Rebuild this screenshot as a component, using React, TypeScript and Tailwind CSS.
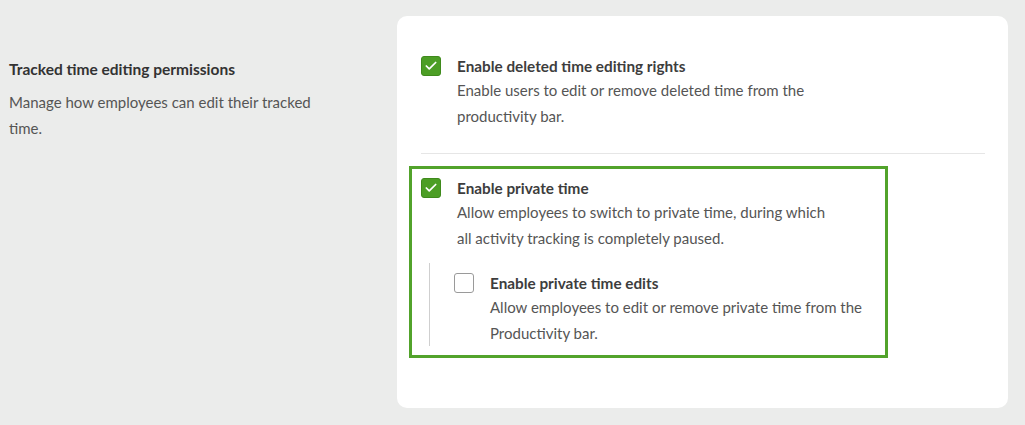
import { Check } from 'lucide-react';

function Checkbox({ checked }: { checked: boolean }) {
  return checked ? (
    <span className="flex items-center justify-center w-5 h-5 shrink-0 rounded-[3px] bg-[#4c9e25] border border-[#3f8a1c]">
      <Check size={14} strokeWidth={3} className="text-white" />
    </span>
  ) : (
    <span className="block w-5 h-5 shrink-0 rounded-[3px] bg-white border border-[#9a9a9a]" />
  );
}

function Option({ checked, title, children }: { checked: boolean; title: string; children: React.ReactNode }) {
  return (
    <div className="flex gap-4">
      <Checkbox checked={checked} />
      <div className="-mt-[1px]">
        <div className="text-[15.3px] leading-[22px] font-bold text-[#3d3d3d]">{title}</div>
        <p className="text-[15px] leading-[26px] text-[#555]">{children}</p>
      </div>
    </div>
  );
}

export default function App() {
  return (
    <div
      className="min-h-screen bg-[#ebeceb] flex pt-4 pb-4"
      style={{ fontFamily: '"Source Sans Pro", Lato, "Noto Sans", sans-serif' }}
    >
      <div className="w-[397px] shrink-0 pl-[9px] pt-[42px]">
        <h2 className="text-[15.5px] leading-[22px] font-bold text-[#333]">Tracked time editing permissions</h2>
        <p className="mt-[9px] w-[320px] text-[15px] leading-[26px] text-[#555]">
          Manage how employees can edit their tracked time.
        </p>
      </div>

      <div className="w-[611px] h-[392px] bg-white rounded-[10px] pl-6 pr-[23px] pt-10">
        <Option checked title="Enable deleted time editing rights">
          Enable users to edit or remove deleted time from the
          <br />
          productivity bar.
        </Option>

        <div className="mt-6 border-t border-[#e6e6e6]" />

        <div className="mt-[12px] -ml-3 w-[479px] border-[3px] border-[#52a32b] pl-[9px] pt-[9px] pb-[9px]">
          <Option checked title="Enable private time">
            Allow employees to switch to private time, during which
            <br />
            all activity tracking is completely paused.
          </Option>

          <div className="mt-[12px] ml-[8px] border-l border-[#cfcfcf] pl-6 pt-[10px]">
            <Option checked={false} title="Enable private time edits">
              Allow employees to edit or remove private time from the
              <br />
              Productivity bar.
            </Option>
          </div>
        </div>
      </div>
    </div>
  );
}
